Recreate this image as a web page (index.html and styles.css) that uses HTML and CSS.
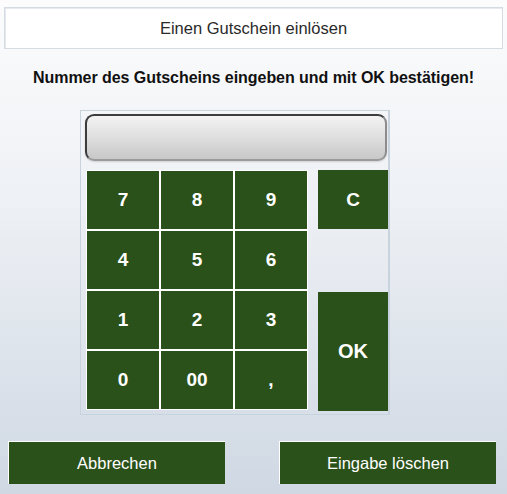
FILE: index.html
```html
<!DOCTYPE html>
<html lang="de">
<head>
<meta charset="utf-8">
<title>Gutschein</title>
<link rel="stylesheet" href="styles.css">
</head>
<body>
<div class="page">
  <div class="header">Einen Gutschein einlösen</div>
  <div class="hint">Nummer des Gutscheins eingeben und mit OK bestätigen!</div>
  <div class="panel">
    <div class="display"></div>
    <div class="pad">
      <div class="keys">
        <div class="key">7</div>
        <div class="key">8</div>
        <div class="key">9</div>
        <div class="key">4</div>
        <div class="key">5</div>
        <div class="key">6</div>
        <div class="key">1</div>
        <div class="key">2</div>
        <div class="key">3</div>
        <div class="key">0</div>
        <div class="key">00</div>
        <div class="key">,</div>
      </div>
      <div class="side">
        <div class="fn c">C</div>
        <div class="fn ok">OK</div>
      </div>
    </div>
  </div>
  <div class="actions">
    <div class="btn">Abbrechen</div>
    <div class="btn">Eingabe löschen</div>
  </div>
</div>
</body>
</html>
```
FILE: styles.css
```css
html, body {
  margin: 0;
  padding: 0;
  height: 100%;
}
body {
  background: linear-gradient(to bottom, #fcfcfd 0%, #eef1f5 40%, #cfd8e3 100%);
  font-family: "Liberation Sans", Arial, sans-serif;
}
.page {
  width: 507px;
  height: 494px;
  box-sizing: border-box;
  padding-top: 7px;
}
.header {
  margin: 0 4px;
  height: 42px;
  box-sizing: border-box;
  background: #fff;
  border: 1px solid #d5dbe2;
  box-shadow: inset 1px 1px 0 #e6eaee;
  display: flex;
  align-items: center;
  justify-content: center;
  font-size: 16.5px;
  color: #2a2a2a;
}
.hint {
  margin-top: 20px;
  text-align: center;
  font-size: 16px;
  font-weight: bold;
  color: #111;
  height: 18px;
  line-height: 18px;
  letter-spacing: -0.05px;
}
.panel {
  margin: 23px 0 0 80px;
  width: 310px;
  height: 305px;
  box-sizing: border-box;
  border: 1px solid #c9d3de;
  border-right-width: 2px;
  padding: 3px 0 0 4px;
}
.display {
  width: 302px;
  height: 47px;
  box-sizing: border-box;
  border-radius: 9px;
  border: 2px solid #3c3c3c;
  border-right-color: #8c8c8c;
  border-bottom-color: #9a9a9a;
  background: linear-gradient(to bottom, #f3f3f3 0%, #dcdcdc 55%, #c8c8c8 100%);
  box-shadow: 0 1px 2px rgba(0,0,0,0.15);
}
.pad {
  margin: 9px 0 0 1px;
  display: flex;
  gap: 10px;
}
.keys {
  display: grid;
  grid-template-columns: repeat(3, 74px);
  grid-template-rows: repeat(4, 60px);
}
.key {
  box-sizing: border-box;
  border: 1px solid #fff;
  background: #2b511a;
  color: #fff;
  font-weight: bold;
  font-size: 19px;
  display: flex;
  align-items: center;
  justify-content: center;
}
.side {
  display: flex;
  flex-direction: column;
  justify-content: space-between;
  width: 70px;
}
.fn {
  background: #2b511a;
  color: #fff;
  font-weight: bold;
  display: flex;
  align-items: center;
  justify-content: center;
}
.c {
  height: 59px;
  font-size: 19px;
}
.ok {
  height: 119px;
  margin-bottom: -1px;
  font-size: 20px;
}
.actions {
  margin-top: 26px;
  padding: 0 11px 0 8px;
  display: flex;
  justify-content: space-between;
}
.btn {
  width: 217px;
  height: 43px;
  box-sizing: border-box;
  background: #2b511a;
  border-top: 1px solid #fff;
  border-left: 1px solid #fff;
  color: #fff;
  font-size: 16.5px;
  display: flex;
  align-items: center;
  justify-content: center;
}
```
